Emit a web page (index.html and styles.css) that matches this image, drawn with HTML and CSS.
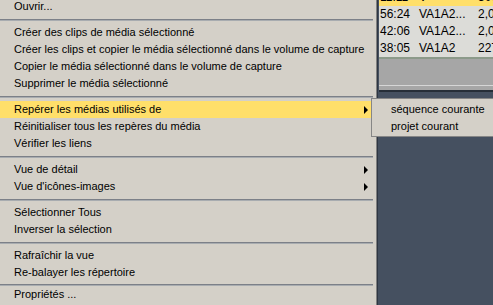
FILE: index.html
```html
<!DOCTYPE html>
<html lang="fr">
<head>
    <meta charset="UTF-8">
    <title>Menu média</title>
    <link rel="stylesheet" href="styles.css">
</head>
<body>

<div class="screen">

    <!-- Menu contextuel principal -->
    <div class="menu">
        <div class="menu-list">
            <div class="item">Ouvrir...</div>
            <div class="sep"></div>
            <div class="item">Créer des clips de média sélectionné</div>
            <div class="item">Créer les clips et copier le média sélectionné dans le volume de capture</div>
            <div class="item">Copier le média sélectionné dans le volume de capture</div>
            <div class="item">Supprimer le média sélectionné</div>
            <div class="sep"></div>
            <div class="item selected has-sub">Repérer les médias utilisés de <span class="arrow"></span></div>
            <div class="item">Réinitialiser tous les repères du média</div>
            <div class="item">Vérifier les liens</div>
            <div class="sep"></div>
            <div class="item has-sub">Vue de détail <span class="arrow"></span></div>
            <div class="item has-sub">Vue d'icônes-images <span class="arrow"></span></div>
            <div class="sep"></div>
            <div class="item">Sélectionner Tous</div>
            <div class="item">Inverser la sélection</div>
            <div class="sep"></div>
            <div class="item">Rafraîchir la vue</div>
            <div class="item">Re-balayer les répertoire</div>
            <div class="sep short"></div>
            <div class="item">Propriétés ...</div>
        </div>
    </div>

    <!-- Fenêtre derrière le menu -->
    <div class="behind">
        <div class="bin">
            <div class="bin-row current"><span class="c1">11:11</span><span class="c2">V</span><span class="c3">300</span></div>
            <div class="bin-row"><span class="c1">56:24</span><span class="c2">VA1A2...</span><span class="c3">2,02</span></div>
            <div class="bin-row"><span class="c1">42:06</span><span class="c2">VA1A2...</span><span class="c3">2,02</span></div>
            <div class="bin-row"><span class="c1">38:05</span><span class="c2">VA1A2</span><span class="c3">227</span></div>
        </div>
        <div class="scroll-strip"></div>
    </div>

    <!-- Sous-menu ouvert -->
    <div class="submenu">
        <div class="item">séquence courante</div>
        <div class="item">projet courant</div>
    </div>

</div>

</body>
</html>
```

FILE: styles.css
```css
/* Généralités */
body {
    margin: 0;
    background-color: #455060;
    font-family: "Liberation Sans", Arial, sans-serif;
    font-size: 11px;
    color: #000;
    overflow: hidden;
}

.screen {
    position: relative;
    display: flex;
    width: 493px;
    height: 305px;
    overflow: hidden;
}

/* Menu principal */
.menu {
    width: 376px;
    flex: none;
    background-color: #d4d0c8;
    border-right: 1px solid #808080;
    box-shadow: 1px 0 0 #2e3642;
    overflow: hidden;
}

.menu-list {
    margin-top: -2px;
}

.item {
    height: 17px;
    line-height: 17px;
    padding-left: 14px;
    white-space: nowrap;
}

.has-sub {
    display: flex;
    align-items: center;
    margin-right: 3px;
}

.arrow {
    margin-left: auto;
    margin-right: 5px;
    width: 0;
    height: 0;
    border-left: 4px solid #000;
    border-top: 4px solid transparent;
    border-bottom: 4px solid transparent;
}

.selected {
    background-color: #ffdf6a;
}

.sep {
    height: 9px;
    margin-right: 3px;
    box-sizing: border-box;
    padding-top: 4px;
}

.sep.short {
    height: 5px;
    padding-top: 3px;
}

.sep::after {
    content: "";
    display: block;
    border-top: 1px solid #7c8088;
    border-bottom: 1px solid #a8acb0;
}

/* Fenêtre en arrière-plan */
.behind {
    flex: 1;
    margin-left: 2px;
    display: flex;
    flex-direction: column;
}

.bin {
    margin-top: -11px;
    background-color: #dcdcd8;
}

.bin-row {
    display: flex;
    height: 17px;
    line-height: 17px;
    font-size: 12px;
    white-space: nowrap;
    padding-left: 1px;
}

.bin-row.current {
    background-color: #ffdf6a;
}

.c1 { width: 39px; flex: none; }
.c2 { width: 59px; flex: none; }
.c3 { flex: none; }

.scroll-strip {
    height: 26px;
    background-color: #a6a6a6;
    border-top: 2px solid #8c9a8a;
    border-bottom: 1px solid #d6d6d6;
    box-shadow: 0 4px 0 #a6a6a6, 0 6px 0 #262e38;
}

/* Sous-menu */
.submenu {
    position: absolute;
    left: 371px;
    top: 98px;
    width: 140px;
    padding: 2px 0 1px;
    background-color: #d4d0c8;
    border: 1px solid #868686;
}

.submenu .item {
    padding-left: 19px;
}
```
